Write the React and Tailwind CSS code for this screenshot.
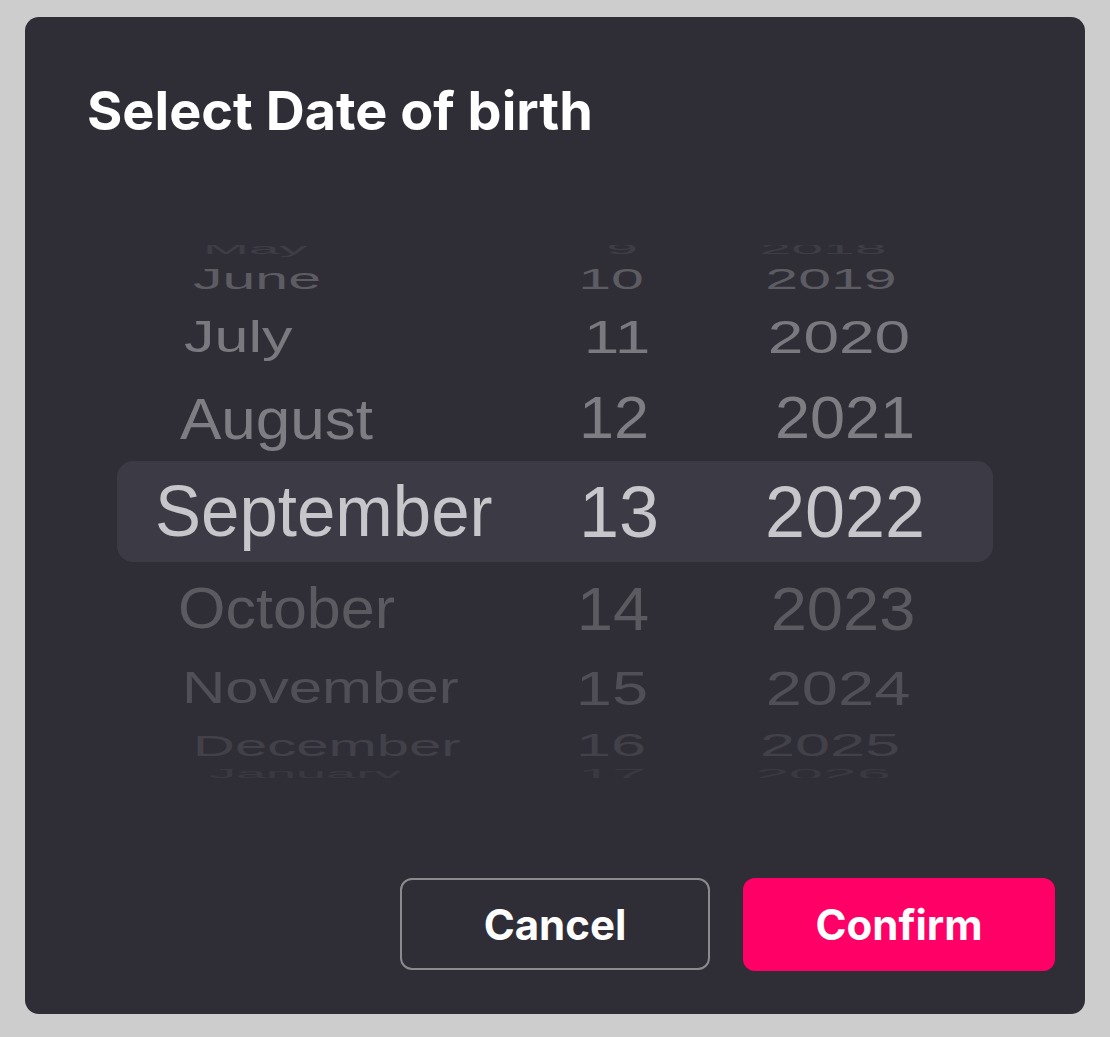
import React from "react";

// wheel rows, top to bottom. sizes/offsets fake the 3D drum of an iOS picker
const rows = [
  { m: "May", d: "9", y: "2018", h: "h-[24px]", sy: "scale-y-[0.25]", c: "text-[#3e3d45]", mfs: "text-[55px]", nfs: "text-[57px]", pl: "pl-[86px]", dx: "translate-x-[5px]", yx: "-translate-x-[22px]" },
  { m: "June", d: "10", y: "2019", h: "h-[37px]", sy: "scale-y-[0.5]", c: "text-[#5d5c63]", mfs: "text-[59px]", nfs: "text-[59px]", pl: "pl-[76px]", dx: "-translate-x-[6px]", yx: "-translate-x-[14px]" },
  { m: "July", d: "11", y: "2020", h: "h-[78px]", sy: "scale-y-[0.73]", c: "text-[#7a797f]", mfs: "text-[61px]", nfs: "text-[64px]", pl: "pl-[67px]", dx: "translate-x-[0px]", yx: "-translate-x-[6px]" },
  { m: "August", d: "12", y: "2021", h: "h-[85px]", sy: "scale-y-[0.93]", c: "text-[#7e7d83]", mfs: "text-[62px]", nfs: "text-[63px]", pl: "pl-[63px]", dx: "-translate-x-[3px]", yx: "translate-x-[0px]" },
  { m: "September", d: "13", y: "2022", active: true },
  { m: "October", d: "14", y: "2023", h: "h-[92px]", sy: "scale-y-[0.95]", c: "text-[#5b5a61]", mfs: "text-[61px]", nfs: "text-[65px]", pl: "pl-[61px]", dx: "-translate-x-[4px]", yx: "-translate-x-[2px]" },
  { m: "November", d: "15", y: "2024", h: "h-[68px]", sy: "scale-y-[0.745]", c: "text-[#504f57]", mfs: "text-[60px]", nfs: "text-[65px]", pl: "pl-[65px]", dx: "-translate-x-[5px]", yx: "-translate-x-[7px]" },
  { m: "December", d: "16", y: "2025", h: "h-[47px]", sy: "scale-y-[0.5]", c: "text-[#424149]", mfs: "text-[58px]", nfs: "text-[63px]", pl: "pl-[76px]", dx: "-translate-x-[6px]", yx: "-translate-x-[15px]" },
  { m: "January", d: "17", y: "2026", h: "h-[8px]", sy: "scale-y-[0.25]", c: "text-[#3a3941]", mfs: "text-[54px]", nfs: "text-[61px]", pl: "pl-[92px]", dx: "-translate-x-[5px]", yx: "-translate-x-[22px]" },
];

const WheelRow = ({ row }) => {
  if (row.active) {
    return (
      <div className="flex items-center h-[101px] shrink-0 rounded-2xl bg-[#3c3b45] text-[#c7c6cb]">
        <div className="w-[440px] pl-[38px]">
          <span className="block leading-none text-[69px] scale-y-[1.04] whitespace-nowrap">{row.m}</span>
        </div>
        <div className="w-[120px] text-center">
          <span className="block leading-none text-[72px] translate-x-[2px]">{row.d}</span>
        </div>
        <div className="flex-1 pl-[20px] text-center">
          <span className="block leading-none text-[72px]">{row.y}</span>
        </div>
      </div>
    );
  }

  return (
    <div className={`flex items-center shrink-0 ${row.h} ${row.c}`}>
      <div className={`w-[440px] ${row.pl}`}>
        <span className={`block leading-none whitespace-nowrap ${row.mfs} ${row.sy}`}>{row.m}</span>
      </div>
      <div className="w-[120px] text-center">
        <span className={`block leading-none ${row.nfs} ${row.sy} ${row.dx}`}>{row.d}</span>
      </div>
      <div className="flex-1 pl-[20px] text-center">
        <span className={`block leading-none ${row.nfs} ${row.sy} ${row.yx}`}>{row.y}</span>
      </div>
    </div>
  );
};

const App = () => {
  return (
    <div className="min-h-screen w-[1110px] h-[1037px] bg-[#cdcdcd] pt-[17px] pl-[25px]">
      <div className="w-[1060px] h-[997px] rounded-[14px] bg-[#2f2e37] flex flex-col">
        {/* TITLE */}
        <h2 className="pt-[67px] pl-[62px] text-white text-[54px] leading-none font-bold font-['Inter',sans-serif]">
          Select Date of birth
        </h2>

        {/* WHEEL */}
        <div className="mt-[107px] mx-[92px] h-[533px] overflow-hidden font-['Liberation_Sans',Arial,sans-serif]">
          <div className="flex flex-col -mt-[8px]">
            {rows.map((row) => (
              <WheelRow key={row.m} row={row} />
            ))}
          </div>
        </div>

        {/* ACTIONS */}
        <div className="mt-[100px] pr-[30px] flex justify-end gap-[33px] font-['Inter',sans-serif]">
          <button className="w-[310px] h-[92px] rounded-[12px] border-2 border-[#8b8b8f] text-white text-[42px] font-bold">
            Cancel
          </button>
          <button className="w-[312px] h-[93px] rounded-[12px] bg-[#ff0066] text-white text-[42px] font-bold">
            Confirm
          </button>
        </div>
      </div>
    </div>
  );
};

export default App;
